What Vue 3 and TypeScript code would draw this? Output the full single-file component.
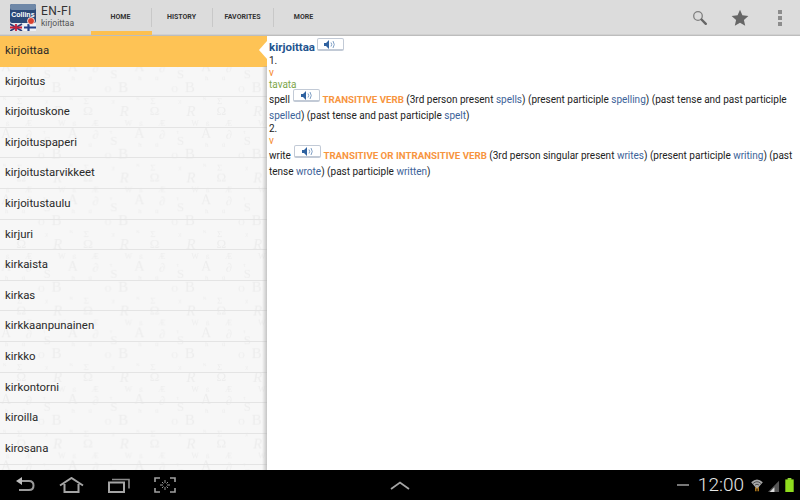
<script setup lang="ts">
const tabs = ['HOME', 'HISTORY', 'FAVORITES', 'MORE']
const words = ['kirjoittaa', 'kirjoitus', 'kirjoituskone', 'kirjoituspaperi', 'kirjoitustarvikkeet', 'kirjoitustaulu', 'kirjuri', 'kirkaista', 'kirkas', 'kirkkaanpunainen', 'kirkko', 'kirkontorni', 'kiroilla', 'kirosana']
const glyphs: { c: string; x: number; y: number; s: number; i?: boolean }[] = [
  { c: 'A', x: 1, y: 21, s: 14 }, { c: '∂', x: 26, y: 22, s: 12 }, { c: 'τ', x: 43, y: 17, s: 7 },
  { c: 'S', x: 43.500, y: 27.500, s: 13 }, { c: 'ħ', x: 5, y: 30, s: 7 }, { c: 'ü', x: 22, y: 30, s: 7 },
  { c: 'B', x: 51.500, y: 41.500, s: 15 }, { c: 'O', x: 38, y: 42, s: 9 }, { c: 'Σ', x: 17, y: 54, s: 9 },
  { c: 'κ', x: 3, y: 50, s: 7 }, { c: 'χ', x: 45, y: 53, s: 7 }, { c: 'Ω', x: 16.500, y: 65, s: 13 },
  { c: 'R', x: 53, y: 65.500, s: 15, i: true }, { c: 'Æ', x: 25, y: 8.500, s: 8 }, { c: 'W', x: 58, y: 9, s: 8 }, { c: 'ß', x: 6, y: 9, s: 7 }
]
</script>

<template>
  <div class="screen">
    <header class="bar">
      <div class="brand">
        <svg class="logo" width="26" height="27" viewBox="0 0 26 27">
          <rect x="0" y="0" width="26" height="27" rx="2" fill="#e8ebef" />
          <rect x="0" y="0" width="26" height="19" rx="2" fill="#2b4a78" />
          <rect x="0" y="0" width="26" height="6" rx="2" fill="#6f88a8" />
          <text x="1.200" y="13" class="logo-text">Collins</text>
          <rect x="0" y="20" width="12" height="7" fill="#e9e3e6" />
          <path d="M0 20L12 27M12 20L0 27" stroke="#2b3f78" stroke-width="1.800" />
          <path d="M6 20V27M0 23.500H12" stroke="#c8203a" stroke-width="1.800" />
          <rect x="14" y="20" width="12" height="7" fill="#eef1f6" />
          <path d="M14 23.500H26M18.500 20V27" stroke="#25418a" stroke-width="2.200" />
          <circle cx="21" cy="17" r="3.500" fill="#d8412f" stroke="#fff" stroke-width="0.800" />
        </svg>
        <div class="titles">
          <div class="title">EN-FI</div>
          <div class="subtitle">kirjoittaa</div>
        </div>
      </div>
      <nav class="tabs">
        <div v-for="(t, i) in tabs" :key="t" class="tab" :class="{ active: i === 0 }">{{ t }}</div>
      </nav>
      <div class="actions">
        <svg width="18" height="18" viewBox="0 0 18 18">
          <circle cx="7" cy="7" r="4.300" fill="none" stroke="#808080" stroke-width="1.300" />
          <path d="M10.500 10.500L14.800 14.800" stroke="#666" stroke-width="2.400" stroke-linecap="round" />
        </svg>
        <svg width="18" height="18" viewBox="0 0 18 18">
          <path d="M9 .8l2.400 5.500 6 .6-4.500 4 1.300 5.900L9 13.700l-5.200 3.100 1.300-5.900-4.500-4 6-.6z" fill="#666" />
        </svg>
        <div class="dots"><i></i><i></i><i></i></div>
      </div>
    </header>

    <main class="main">
      <aside class="list">
        <svg class="pattern" width="267" height="434" aria-hidden="true">
          <defs>
            <pattern id="letters" width="66.700" height="66.500" patternUnits="userSpaceOnUse" patternTransform="translate(0 -52)">
              <text v-for="g in glyphs" :key="g.c + g.x" :x="g.x" :y="g.y" :font-size="g.s" :font-style="g.i ? 'italic' : 'normal'" class="glyph">{{ g.c }}</text>
            </pattern>
          </defs>
          <rect width="267" height="434" fill="url(#letters)" />
        </svg>
        <div v-for="(w, i) in words" :key="w" class="row" :class="{ selected: i === 0 }">{{ w }}</div>
        <div class="edge"></div>
        <div class="notch"></div>
      </aside>

      <section class="entry">
        <div class="head">
          <b class="word">kirjoittaa</b>
          <span class="sound head-sound"><svg width="12" height="9" viewBox="0 0 12 9"><path d="M0 3h2l3-3v9L2 6H0z" fill="#2f62a0" /><path d="M7 2.500q1.500 2 0 4M9 1q2.500 3.500 0 7" fill="none" stroke="#7f9fc4" /></svg></span>
        </div>
        <div class="line">1.</div>
        <div class="line pos">v</div>
        <div class="line trans">tavata</div>
        <p class="para">spell <span class="sound"><svg width="12" height="9" viewBox="0 0 12 9"><path d="M0 3h2l3-3v9L2 6H0z" fill="#2f62a0" /><path d="M7 2.500q1.500 2 0 4M9 1q2.500 3.500 0 7" fill="none" stroke="#7f9fc4" /></svg></span> <b class="gram">TRANSITIVE VERB</b> (3rd person present <a>spells</a>) (present participle <a>spelling</a>) (past tense and past participle <a>spelled</a>) (past tense and past participle <a>spelt</a>)</p>
        <div class="line">2.</div>
        <div class="line pos">v</div>
        <p class="para">write <span class="sound"><svg width="12" height="9" viewBox="0 0 12 9"><path d="M0 3h2l3-3v9L2 6H0z" fill="#2f62a0" /><path d="M7 2.500q1.500 2 0 4M9 1q2.500 3.500 0 7" fill="none" stroke="#7f9fc4" /></svg></span> <b class="gram">TRANSITIVE OR INTRANSITIVE VERB</b> (3rd person singular present <a>writes</a>) (present participle <a>writing</a>) (past tense <a>wrote</a>) (past participle <a>written</a>)</p>
      </section>
    </main>

    <footer class="sys">
      <div class="sys-left">
        <svg width="20" height="16" viewBox="0 0 20 16"><path d="M3 4h11q4.500 0 4.500 4.500T14 13H4" fill="none" stroke="#9b9b9b" stroke-width="2" /><path d="M7 0L1 4l6 4z" fill="#bdbdbd" /></svg>
        <svg width="25" height="16" viewBox="0 0 25 16"><path d="M1 8.500L12.500 1 24 8.500M5.500 7V15h14V7" fill="none" stroke="#a5a5a5" stroke-width="2" /></svg>
        <svg width="22" height="16" viewBox="0 0 22 16"><path d="M1 5.500h15v9.500H1z" fill="none" stroke="#a5a5a5" stroke-width="2" /><path d="M4 2.500h17v9" fill="none" stroke="#8a8a8a" stroke-width="1.600" /></svg>
        <svg width="22" height="16" viewBox="0 0 22 16"><path d="M1 5V1h5M16 1h5v4M21 11v4h-5M6 15H1v-4" fill="none" stroke="#a0a0a0" stroke-width="1.600" /><path d="M11 3v3M11 10v3M6 8h3M13 8h3M8 5l1.500 1.500M14 5l-1.500 1.500M8 11l1.500-1.500M14 11l-1.500-1.500" stroke="#9a9a9a" /></svg>
      </div>
      <svg class="chev" width="20" height="9" viewBox="0 0 20 9"><path d="M1 8L10 1.500 19 8" fill="none" stroke="#a5a5a5" stroke-width="1.800" /></svg>
      <div class="sys-right">
        <span class="dash"></span>
        <span class="clock">12:00</span>
        <svg width="12" height="14" viewBox="0 0 15 18"><path d="M0 5.500Q7.500-1.500 15 5.500L7.500 14z" fill="#a8a8a8" /><path d="M2.500 7Q7.500 2.500 12.500 7M5 9q2.500-2 5 0" fill="none" stroke="#333" /><path d="M6 12v5M9 12v5" stroke="#e49a22" stroke-width="1.500" /></svg>
        <svg class="signal" width="13" height="13" viewBox="0 0 12 14"><path d="M0 14L12 2v12z" fill="#555" /><path d="M2 14l5-5v5z" fill="#ddd" /></svg>
        <svg class="batt" width="9" height="14" viewBox="0 0 9 15"><rect x="2.500" y="0" width="4" height="2" fill="#8fd23a" /><rect x="0" y="1.500" width="9" height="13.500" fill="#8fdc1e" /></svg>
      </div>
    </footer>
  </div>
</template>

<style scoped>
.screen {
  width: 800px;
  height: 500px;
  display: flex;
  flex-direction: column;
  overflow: hidden;
  font-family: Roboto, "Liberation Sans", sans-serif;
  background: #fff;
}
.bar {
  height: 36px;
  flex: none;
  box-sizing: border-box;
  display: flex;
  background: #dcdcdc;
  border-bottom: 1px solid #bdbdbd;
  box-shadow: inset 0 -1px 0 #d0d0d0;
}
.brand {
  width: 91px;
  flex: none;
  box-sizing: border-box;
  display: flex;
  gap: 5px;
  padding: 4px 0 0 10px;
}
.logo { flex: none; }
.logo-text { font: 700 7px "Liberation Sans", sans-serif; fill: #fff; }
.title { font-size: 12px; line-height: 14px; letter-spacing: 0.4px; color: #333; }
.subtitle { font-size: 8.500px; line-height: 11px; color: #555; }
.tabs { display: flex; }
.tab {
  width: 61px;
  height: 35px;
  box-sizing: border-box;
  padding: 12px 2px 0 0;
  text-align: center;
  font-size: 7px;
  line-height: 10px;
  font-weight: 700;
  color: #333;
  position: relative;
}
.tab::after {
  content: "";
  position: absolute;
  right: 0;
  top: 8px;
  height: 19px;
  width: 1px;
  background: #c8c8c8;
}
.tab:last-child::after { display: none; }
.tab.active { border-bottom: 4px solid #fdc04f; }
.actions {
  margin-left: auto;
  display: flex;
  align-items: center;
  gap: 22px;
  padding-right: 11px;
  height: 35px;
}
.dots { width: 18px; display: flex; flex-direction: column; align-items: center; gap: 2px; }
.dots i { width: 4px; height: 4px; background: #8c8c8c; display: block; }
.main { flex: 1; display: flex; min-height: 0; }
.list {
  width: 267px;
  flex: none;
  position: relative;
  overflow: hidden;
  background: #f7f7f7;
}
.pattern {
  position: absolute;
  left: 0;
  top: 0;
}
.glyph {
  font-family: "Liberation Serif", serif;
  fill: #ededed;
}
.row {
  height: 30.620px;
  box-sizing: border-box;
  position: relative;
  padding-left: 5px;
  font-size: 11.400px;
  line-height: 29px;
  color: #2a2a2a;
  border-bottom: 1px solid #e4e4e4;
}
.row.selected { background: #fec355; border-bottom-color: #fec355; }
.edge {
  position: absolute;
  top: 30px;
  right: 0;
  bottom: 0;
  width: 5px;
  background: linear-gradient(to right, rgba(180, 180, 180, 0), rgba(170, 170, 170, 0.65));
}
.notch {
  position: absolute;
  top: 4px;
  right: -1px;
  width: 0;
  height: 0;
  border-top: 10px solid transparent;
  border-bottom: 10px solid transparent;
  border-right: 9px solid #fff;
}
.entry {
  flex: 1;
  box-sizing: border-box;
  padding: 3px 2px 0 2px;
  font-size: 10px;
  color: #222;
  min-width: 0;
}
.head { height: 16px; line-height: 16px; }
.word { font-size: 11.500px; color: #24548f; font-weight: 700; }
.line { height: 12px; line-height: 12px; }
.pos { color: #f58a2e; }
.trans { color: #7da64a; }
.para { margin: 1px 0 -1px; line-height: 16px; }
.para a { color: #3c6399; }
.gram { color: #f7953f; font-weight: 700; font-size: 9.700px; }
.sound {
  display: inline-block;
  overflow: hidden;
  box-sizing: border-box;
  width: 26.500px;
  height: 13px;
  margin: -4px 0 0 1px;
  padding-top: 1px;
  background: #fff;
  border: 1px solid #c2cad6;
  border-bottom-width: 2px;
  border-radius: 2px;
  vertical-align: 1px;
  text-align: center;
  line-height: 0;
}
.head-sound { vertical-align: 0; margin-left: 2px; }
.sys {
  height: 30px;
  flex: none;
  background: #000;
  display: flex;
  align-items: center;
  position: relative;
  justify-content: space-between;
}
.sys-left { display: flex; align-items: center; gap: 24px; padding-left: 15px; }
.chev { position: absolute; left: 390px; top: 11px; }
.sys-right { display: flex; align-items: center; gap: 2px; padding-right: 6px; }
.dash { width: 12px; height: 1.500px; background: #777; margin-right: 7px; }
.clock { font-size: 19px; font-weight: 300; color: #e6e6e6; line-height: 30px; margin-right: 5px; }
.signal { margin-left: 2px; }
.batt { margin-left: 3px; }
</style>
